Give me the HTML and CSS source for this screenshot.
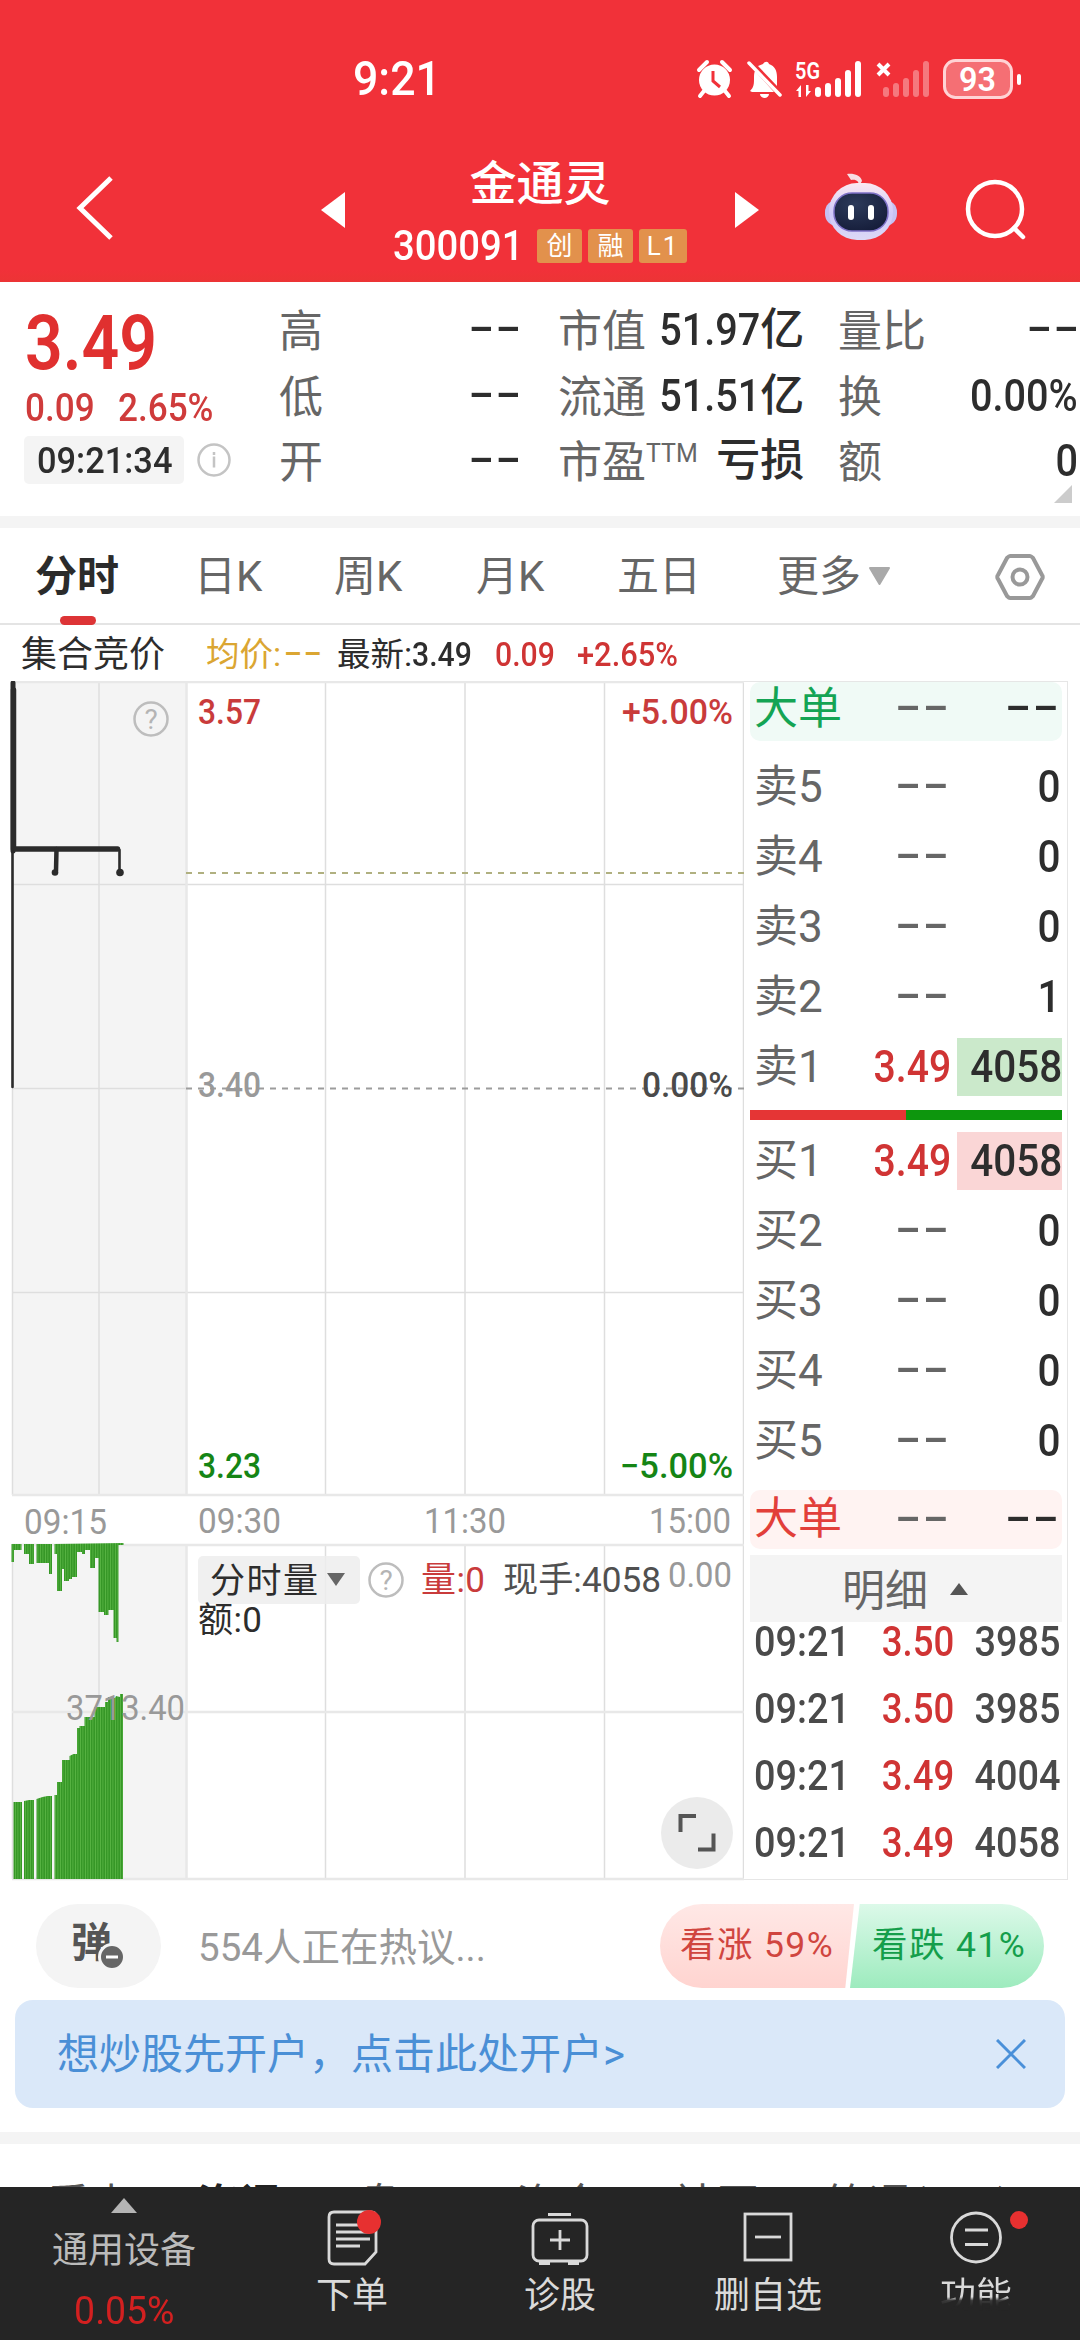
FILE: index.html
```html
<!DOCTYPE html>
<html lang="zh-CN">
<head>
<meta charset="utf-8">
<title>金通灵 300091</title>
<link rel="stylesheet" href="styles.css">
</head>
<body>
<header class="header">
  <div class="status">
    <span class="clock"><span class="num">9:21</span></span>
    <svg class="status-icons" width="330" height="44" viewBox="694 57 330 44">
      <g fill="#fff">
        <circle cx="714.500" cy="80" r="15.500"/>
        <path d="M699 70l8-8M730 70l-8-8M704 91l-4 5M725 91l4 5" stroke="#fff" stroke-width="4" stroke-linecap="round"/>
        <path d="M713 71v10l7 6" fill="none" stroke="#f13139" stroke-width="3"/>
        <path d="M750 91c4-4 4-7 4-13 0-3 0-5 1-7l19 21h-22z"/>
        <path d="M758 66l5-2c2-3 5-3 6 0 6 2 8 7 8 13v9z"/>
        <path d="M749 63l31 32" stroke="#fff" stroke-width="3.500" stroke-linecap="round"/>
        <path d="M760 94h9a4.500 4 0 0 1-9 0z"/>
        <text x="795" y="79" font-size="23" font-weight="600" textLength="25" lengthAdjust="spacingAndGlyphs">5G</text>
        <path d="M796 91l5-6v12h-2.500v-6zM806 97l5-6h-2.500v-6h-2.500z"/>
        <rect x="815" y="87" width="6" height="10" rx="3"/><rect x="825" y="83" width="6" height="14" rx="3"/><rect x="835" y="78" width="6" height="19" rx="3"/><rect x="845" y="70" width="6" height="27" rx="3"/><rect x="855" y="61" width="6" height="36" rx="3"/>
        <path d="M878 64l11 11M889 64l-11 11" stroke="#fff" stroke-width="4"/>
        <g opacity=".35"><rect x="883" y="87" width="6" height="10" rx="3"/><rect x="893" y="83" width="6" height="14" rx="3"/><rect x="903" y="78" width="6" height="19" rx="3"/><rect x="913" y="70" width="6" height="27" rx="3"/><rect x="923" y="61" width="6" height="36" rx="3"/></g>
        <rect x="944.500" y="60.500" width="67" height="37" rx="11" fill="#fff" fill-opacity=".3" stroke="#ffd3d5" stroke-width="3"/>
        <rect x="1017" y="74" width="4" height="11" rx="2"/>
        <text x="959" y="91" font-size="34" font-weight="600" textLength="37" lengthAdjust="spacingAndGlyphs">93</text>
      </g>
    </svg>
  </div>
  <div class="titlebar">
    <svg class="back" width="40" height="66" viewBox="0 0 40 66"><path d="M36 3L5 33l31 30" fill="none" stroke="#fff" stroke-width="5"/></svg>
    <svg class="arrow" width="24" height="36" viewBox="0 0 24 36"><path d="M24 0v36L0 18z" fill="#fff"/></svg>
    <div class="title">
      <h1>金通灵</h1>
      <div class="code"><span class="code-no num">300091</span><i>创</i><i>融</i><i class="wide">L1</i></div>
    </div>
    <svg class="arrow" width="24" height="36" viewBox="0 0 24 36"><path d="M0 0v36l24-18z" fill="#fff"/></svg>
    <span></span>
    <svg class="bot" width="72" height="68" viewBox="825 173 72 68">
      <defs>
        <linearGradient id="shell" x1="0" y1="0" x2="0" y2="1"><stop offset="0" stop-color="#fbe9f1"/><stop offset=".55" stop-color="#cfc8fa"/><stop offset="1" stop-color="#dcd9f6"/></linearGradient>
        <radialGradient id="visor" cx=".4" cy=".3" r=".8"><stop offset="0" stop-color="#2c3a5a"/><stop offset="1" stop-color="#141b38"/></radialGradient>
      </defs>
      <path d="M847 174c6-1 14 1 15 7l-3 5c0-5-3-7-8-6z" fill="#f7dfe4"/>
      <rect x="825" y="200" width="72" height="26" rx="12" fill="#c6c1f3"/>
      <rect x="829" y="183" width="64" height="57" rx="28" fill="url(#shell)"/>
      <rect x="834" y="193" width="54" height="38" rx="18" fill="url(#visor)" stroke="#7d70c6" stroke-width="1.500"/>
      <rect x="848" y="205" width="6" height="15" rx="3" fill="#fff"/><rect x="868" y="205" width="6" height="15" rx="3" fill="#fff"/>
    </svg>
    <span></span>
    <svg class="find" width="62" height="62" viewBox="965 179 62 62" fill="none" stroke="#fff" stroke-width="4.500" stroke-linecap="round"><circle cx="995" cy="209" r="27"/><path d="M1014 228l9 9"/></svg>
  </div>
</header>

<section class="quote">
  <div class="price">
    <div class="last"><span class="num">3.49</span></div>
    <div class="change"><span class="num">0.09</span><span class="num">2.65%</span></div>
    <div class="stamp"><span class="chip"><span class="num">09:21:34</span></span>
      <svg width="34" height="34" viewBox="0 0 34 34" fill="none" stroke="#c4c4c4"><circle cx="17" cy="17" r="15.500" stroke-width="2.500"/><path d="M17 13.500v11M17 9v3" stroke-width="2.500"/></svg></div>
  </div>
  <dl class="c1"><dt>高</dt><dd><span class="dash">--</span></dd><dt>低</dt><dd><span class="dash">--</span></dd><dt>开</dt><dd><span class="dash">--</span></dd></dl>
  <dl class="c2"><dt>市值</dt><dd><span class="num">51.97</span>亿</dd><dt>流通</dt><dd><span class="num">51.51</span>亿</dd><dt>市盈<sup>TTM</sup></dt><dd>亏损</dd></dl>
  <dl class="c3"><dt>量比</dt><dd><span class="dash">--</span></dd><dt>换</dt><dd><span class="num">0.00%</span></dd><dt>额</dt><dd><span class="num">0</span></dd></dl>
  <svg class="corner" width="18" height="18" viewBox="0 0 18 18"><path d="M18 0v18H0z" fill="#ccc"/></svg>
</section>

<nav class="periods">
  <span class="on">分时</span><span>日K</span><span>周K</span><span>月K</span><span>五日</span>
  <span class="more">更多<svg width="23" height="19" viewBox="0 0 23 19"><path d="M2 1h19L11.500 17z" fill="#a9a9a9" stroke="#a9a9a9" stroke-width="2" stroke-linejoin="round"/></svg></span>
  <svg width="50" height="48" viewBox="0 0 50 48" fill="none" stroke="#999" stroke-width="4" stroke-linejoin="round"><path d="M15 3h20c1 0 2 1 3 2l9 17c1 1 1 3 0 4l-9 17c-1 1-2 2-3 2H15c-1 0-2-1-3-2L3 26c-1-1-1-3 0-4l9-17c1-1 2-2 3-2z"/><circle cx="25" cy="24" r="7.500"/></svg>
</nav>

<div class="legend">
  <span class="auction">集合竞价</span>
  <span class="avg">均价:<span class="dash">--</span></span>
  <span>最新:<span class="num">3.49</span></span>
  <span class="up num">0.09</span>
  <span class="up num gain">+2.65%</span>
</div>

<main class="board">
  <svg class="chart" width="744" height="1200" viewBox="0 681 744 1200">
    <defs><pattern id="bar" width="2.500" height="10" patternUnits="userSpaceOnUse"><rect width="2.500" height="10" fill="#369727"/><rect width=".7" height="10" fill="#60bb49"/></pattern></defs>
    <path d="M12 681h174v814H12zM12 1545h174v334H12z" fill="#f4f4f4"/>
    <g stroke="#dedede" fill="none">
      <path stroke-width="1.500" d="M12.500 681v814M99 681v814M325.500 681v814M465 681v814M604.500 681v814M12.500 1545v334M99 1545v334M325.500 1545v334M465 1545v334M604.500 1545v334M12 884.500h732M12 1088.500h174M12 1292.500h732M743.500 681v1199"/>
      <path stroke="#e8e8e8" stroke-width="2.500" d="M186.500 681v814M186.500 1545v334M12 682h732M12 1495h732M12 1545h732M12 1712h732M12 1879h732"/>
    </g>
    <path d="M186 873h558" stroke="#b0b080" stroke-width="2" stroke-dasharray="6 6"/>
    <path d="M186 1088.500h558" stroke="#9c9c9c" stroke-width="2" stroke-dasharray="6 6"/>
    <g fill="none" stroke="#2b2b2b" stroke-linecap="round" stroke-linejoin="round">
      <path d="M13 683v168" stroke-width="5"/><path d="M13.500 690v159h104" stroke-width="5.500"/><path d="M56.500 849l-.5 22" stroke-width="4.500"/>
      <path d="M12.500 850v237M119.500 850v22" stroke-width="2.600"/>
    </g>
    <g fill="#2b2b2b"><circle cx="55" cy="872.500" r="3.300"/><circle cx="120" cy="872.500" r="3.800"/></g>
    <path fill="url(#bar)" d="M11.500 1544v18h2.500v-12h7.500v-6zM24 1544v10h5v10h5v-20zM36.500 1544v19h12.500v11h3v-30zM54.500 1544v10h2.500v37h5v-22h2v12h5v-2h3v-2h5v-25h5v2h3v-4h5v18h5v-10h3.500v54h5.500v3h4.500v-5h5v28h3v4h2v-97h5v-2z"/>
    <path fill="url(#bar)" d="M13.500 1879v-77h8.500v77zM24 1879v-78l5-1h5v79zM36.500 1879v-80l6-2 5-1h4.500v83zM54.500 1879v-84h2.500v-13h5v-22h7.500v-4l4-2h3.500v-26h2.500v-2h5v-9h10v-10h10.500v-5h3v-5l7 1 1-2 4 1v-3h3v185z"/>
    <g class="q"><circle cx="151" cy="719" r="16.500"/><text x="151" y="729" text-anchor="middle">?</text><circle cx="386" cy="1580" r="16.500"/><text x="386" y="1590" text-anchor="middle">?</text></g>
    <g class="axis">
      <text class="up" x="198" y="724" textLength="63" lengthAdjust="spacingAndGlyphs">3.57</text>
      <text class="up" x="622" y="724" textLength="111" lengthAdjust="spacingAndGlyphs">+5.00%</text>
      <text class="mute" x="198" y="1097" textLength="63" lengthAdjust="spacingAndGlyphs">3.40</text>
      <text class="flat" x="642" y="1097" textLength="91" lengthAdjust="spacingAndGlyphs">0.00%</text>
      <text class="down" x="198" y="1478" textLength="63" lengthAdjust="spacingAndGlyphs">3.23</text>
      <text class="down" x="620" y="1478" textLength="113" lengthAdjust="spacingAndGlyphs">−5.00%</text>
    </g>
    <g class="axis time">
      <text x="24" y="1534" textLength="83" lengthAdjust="spacingAndGlyphs">09:15</text>
      <text x="198" y="1533" textLength="83" lengthAdjust="spacingAndGlyphs">09:30</text>
      <text x="424" y="1533" textLength="82" lengthAdjust="spacingAndGlyphs">11:30</text>
      <text x="649" y="1533" textLength="82" lengthAdjust="spacingAndGlyphs">15:00</text>
      <text x="66" y="1720" textLength="119" lengthAdjust="spacingAndGlyphs">3713.40</text>
      <text x="668" y="1587" textLength="64" lengthAdjust="spacingAndGlyphs">0.00</text>
    </g>
    <rect x="198" y="1556" width="162" height="48" rx="5" fill="#ededed" fill-opacity=".85"/>
    <path d="M327 1573h18l-9 13z" fill="#666"/>
    <g class="vol">
      <text x="210" y="1593" textLength="108">分时量</text>
      <text x="198" y="1632" textLength="64">额:0</text>
      <text x="421" y="1592" textLength="64" fill="#c93b3b">量:0</text>
      <text x="503" y="1592" textLength="158" lengthAdjust="spacingAndGlyphs" fill="#505050">现手:4058</text>
    </g>
    <circle cx="697" cy="1833" r="36" fill="#ebebeb"/>
    <path d="M680.500 1832v-16h15.500M698 1849.500h15.500v-16" fill="none" stroke="#555" stroke-width="4"/>
  </svg>

  <aside class="book">
    <div class="row big sell"><b>大单</b><span><span class="dash">--</span></span><em><span class="dash">--</span></em></div>
    <div class="levels">
      <div class="row"><b>卖5</b><span><span class="dash">--</span></span><em><span class="num">0</span></em></div>
      <div class="row"><b>卖4</b><span><span class="dash">--</span></span><em><span class="num">0</span></em></div>
      <div class="row"><b>卖3</b><span><span class="dash">--</span></span><em><span class="num">0</span></em></div>
      <div class="row"><b>卖2</b><span><span class="dash">--</span></span><em><span class="num">1</span></em></div>
      <div class="row"><b>卖1</b><span class="up"><span class="num">3.49</span></span><em class="ask"><span class="num">4058</span></em></div>
    </div>
    <div class="ratio"><i></i><i></i></div>
    <div class="levels">
      <div class="row"><b>买1</b><span class="up"><span class="num">3.49</span></span><em class="bid"><span class="num">4058</span></em></div>
      <div class="row"><b>买2</b><span><span class="dash">--</span></span><em><span class="num">0</span></em></div>
      <div class="row"><b>买3</b><span><span class="dash">--</span></span><em><span class="num">0</span></em></div>
      <div class="row"><b>买4</b><span><span class="dash">--</span></span><em><span class="num">0</span></em></div>
      <div class="row"><b>买5</b><span><span class="dash">--</span></span><em><span class="num">0</span></em></div>
    </div>
    <div class="row big buy"><b>大单</b><span><span class="dash">--</span></span><em><span class="dash">--</span></em></div>
    <div class="detail">明细<svg width="18" height="12" viewBox="0 0 18 12"><path d="M9 0l9 12H0z" fill="#555"/></svg></div>
    <div class="ticks">
      <div class="row"><b><span class="num">09:21</span></b><span class="up"><span class="num">3.50</span></span><em><span class="num">3985</span></em></div>
      <div class="row"><b><span class="num">09:21</span></b><span class="up"><span class="num">3.50</span></span><em><span class="num">3985</span></em></div>
      <div class="row"><b><span class="num">09:21</span></b><span class="up"><span class="num">3.49</span></span><em><span class="num">4004</span></em></div>
      <div class="row"><b><span class="num">09:21</span></b><span class="up"><span class="num">3.49</span></span><em><span class="num">4058</span></em></div>
    </div>
  </aside>
</main>

<section class="talk">
  <div class="danmu">弹<svg width="28" height="28" viewBox="0 0 28 28"><circle cx="14" cy="14" r="12.500" fill="#666" stroke="#f4f4f4" stroke-width="3"/><path d="M8 14h12" stroke="#fff" stroke-width="3"/></svg></div>
  <span class="hot">554人正在热议...</span>
  <div class="vote"><span class="bull">看涨 59%</span><span class="bear">看跌 41%</span></div>
</section>

<section class="banner"><span>想炒股先开户，点击此处开户&gt;</span>
  <svg width="30" height="30" viewBox="0 0 30 30" stroke="#4a90d9" stroke-width="3"><path d="M1 1l28 28M29 1L1 29"/></svg>
</section>

<nav class="feeds"><span>看点</span><strong>资讯</strong><span>盘口</span><span>资金</span><span>社区</span><span>简况(F10)</span></nav>

<footer class="dock">
  <div class="index"><svg width="26" height="15" viewBox="0 0 26 15"><path d="M13 0l13 15H0z" fill="#b4b4b4"/></svg><span>通用设备</span><strong class="num">0.05%</strong></div>
  <div class="tool">
    <svg width="60" height="60" viewBox="322 2207 60 60" fill="none" stroke="#d9d9d9" stroke-width="2.800"><path d="M334 2212h37q5 0 5 5v35l-11 12h-31q-5 0-5-5v-42q0-5 5-5z"/><path d="M336 2225h24M336 2232h34M336 2239h34M336 2246h24"/><circle cx="369" cy="2222" r="12" fill="#e73030" stroke="none"/></svg>
    <span>下单</span></div>
  <div class="tool">
    <svg width="60" height="60" viewBox="530 2207 60 60" fill="none" stroke="#d9d9d9" stroke-width="2.800"><rect x="533" y="2220" width="54" height="41" rx="6"/><path d="M548 2214.500h23M560 2230v20M550 2240h20"/><path d="M539 2263h11M568 2263h11" stroke-width="4"/></svg>
    <span>诊股</span></div>
  <div class="tool">
    <svg width="60" height="60" viewBox="737 2207 60 60" fill="none" stroke="#d9d9d9" stroke-width="2.800"><rect x="744" y="2214" width="46" height="46"/><path d="M754 2237h26"/></svg>
    <span>删自选</span></div>
  <div class="tool fade">
    <svg width="86" height="60" viewBox="932 2207 86 60" fill="none" stroke="#d9d9d9" stroke-width="2.800" overflow="visible"><circle cx="975" cy="2237.500" r="24.500"/><path d="M964 2230h23M964 2244.500h23"/><circle cx="1018" cy="2220" r="9" fill="#e73030" stroke="none"/></svg>
    <span>功能</span></div>
</footer>
</body>
</html>
```
FILE: styles.css
```css
* { box-sizing: border-box; margin: 0; padding: 0; }
body {
  width: 1080px; height: 2340px; overflow: hidden;
  background: #fff; color: #2d2d2d;
  font-family: Roboto, "Noto Sans CJK SC", sans-serif;
}
svg { display: block; flex: none; }
svg text { font-family: Roboto, "Noto Sans CJK SC", sans-serif; }
i, em { font-style: normal; }
.up { color: #cf3434; }

/* condensed numerals */
.num { display: inline-block; font-weight: 500; transform: scaleX(.9); transform-origin: left center; }
/* wide placeholder dashes */
.dash { display: inline-block; font-weight: 500; letter-spacing: 1px; transform: translate(3px, -3px) scaleX(1.7); transform-origin: right center; }

.header { height: 282px; background: linear-gradient(#f13139 270px, #ec3435); color: #fff; }
.status { height: 130px; display: flex; justify-content: space-between; padding: 57px 56px 0 353px; }
.clock { font-size: 48px; line-height: 44px; }
.clock .num { font-weight: 500; transform: scaleX(.93); }
.titlebar { height: 152px; display: grid; grid-template-columns: 321px 24px 390px 24px 66px 72px 68px 62px; align-items: center; }
.back { margin-left: 75px; margin-top: 3px; }
.arrow { margin-top: 8px; }
.bot { margin-top: 2px; }
.find { margin-top: 7px; }
.title { align-self: start; padding-top: 23px; display: flex; flex-direction: column; align-items: center; }
.title h1 { font-size: 47px; font-weight: 500; line-height: 62px; }
.code { display: flex; gap: 6px; margin-top: 14px; height: 34px; line-height: 34px; }
.code-no { font-size: 42.500px; width: 138px; }
.code i { width: 45px; height: 34px; border-radius: 3px; background: #e2914c; font-size: 26px; line-height: 34px; text-align: center; }
.code .wide { width: 48px; letter-spacing: 2px; }

.quote { position: relative; height: 246px; display: grid; grid-template-columns: 279px 241px 281px 279px; border-bottom: 12px solid #f4f4f4; padding-top: 15px; }
.price { padding-left: 25px; }
.last { font-size: 76px; line-height: 92px; color: #e0302f; }
.last .num { font-weight: 600; transform: scaleX(.87); }
.change { display: grid; grid-template-columns: 93px 120px; font-size: 39px; line-height: 36px; color: #cf3b3b; padding-top: 1px; }
.stamp { display: flex; align-items: center; gap: 13px; margin: 10px 0 0 -1px; }
.chip { width: 160px; height: 48px; background: #f4f4f4; border-radius: 5px; padding-left: 13px; font-size: 37px; line-height: 49px; }
.chip .num { transform: scaleX(.93); }
.quote dl { display: grid; grid-template-columns: 90px 1fr; grid-auto-rows: 65.500px; line-height: 66px; font-size: 44px; }
.quote dt { color: #666; padding-top: 2px; white-space: nowrap; }
.quote dd { text-align: right; font-weight: 500; white-space: nowrap; }
.quote dd .num { transform-origin: right center; }
.quote sup { font-size: 25px; line-height: 1; vertical-align: 16px; }
.c2 { margin-left: 38px; }
.c3 { margin-left: 37px; margin-right: 2px; }
.corner { position: absolute; right: 8px; bottom: 13px; }

.periods { height: 97px; border-bottom: 2px solid #e4e4e4; display: grid; grid-template-columns: 159px 140px 142px 141px 160px 218px 50px; padding-left: 35px; align-items: center; font-size: 42px; color: #666; line-height: 97px; }
.periods .on { position: relative; color: #2b2b2b; font-weight: 700; }
.periods .on::after { content: ""; position: absolute; left: 25px; bottom: 0; width: 36px; height: 9px; border-radius: 5px; background: #dd3436; }
.more { display: flex; align-items: center; gap: 7px; }

.legend { height: 56px; display: grid; grid-template-columns: 185px 131px 158px 82px 120px; padding: 2px 0 0 21px; font-size: 33.500px; line-height: 56px; white-space: nowrap; }
.auction { font-size: 36px; }
.avg { color: #dba632; }
.avg .dash { transform: translate(3px, -2px) scaleX(1.6); transform-origin: left center; }
.gain { transform: scaleX(.92); }

.board { display: flex; height: 1200px; }
.q circle { fill: none; stroke: #bdbdbd; stroke-width: 2.500; }
.q text { fill: #b4b4b4; font-size: 28px; }
.axis text { font-size: 35px; font-weight: 500; }
.axis .up { fill: #c93b3b; }
.axis .down { fill: #158515; }
.axis .mute { fill: #999; }
.axis .flat { fill: #4a4a4a; }
.axis.time text { fill: #999; font-weight: 400; }
.vol { font-size: 35px; fill: #2d2d2d; }

.book { width: 324px; height: 1199px; border: 1.500px solid #e6e6e6; border-left: 0; padding: 0 5px 0 6px; font-size: 45px; }
.row { display: grid; grid-template-columns: 90px 111px 6px 105px; height: 70px; line-height: 70px; }
.row b { font-weight: 400; font-size: 44px; color: #666; padding-left: 4px; white-space: nowrap; }
.row > span { text-align: right; color: #666; padding-right: 3px; }
.row > span.up { color: #d03434; padding: 0; }
.row .num { transform-origin: right center; }
.row .up .num { transform: scaleX(.87); }
.row b .num { transform-origin: left center; }
.row em { grid-column: 4; text-align: right; color: #2d2d2d; height: 58px; line-height: 58px; align-self: center; padding-right: 1px; }
.row em .dash { margin-right: 3px; }
.row em.ask, .row em.bid { padding-right: 0; }
.big { height: 59px; line-height: 54px; border-radius: 10px; }
.big em { line-height: 54px; align-self: start; }
.sell { background: #f0faf6; margin-bottom: 11px; }
.sell b { color: #14a454; }
.buy { background: #fff3f2; }
.buy b { color: #e23f3a; }
.ask { background: #cbe9cb; }
.bid { background: #fad6d6; }
.ratio { height: 10px; display: flex; margin: 8px 0 6px; }
.ratio i { flex: 1; background: #e53535; }
.ratio i + i { background: #0d960d; }
.levels + .buy { margin-top: 14px; line-height: 59px; }
.levels + .buy em { line-height: 59px; }
.detail { margin-top: 6px; height: 67px; background: #f4f4f4; display: flex; align-items: center; justify-content: center; gap: 22px; font-size: 43px; line-height: 70px; padding: 4px 2px 0 0; color: #666; }
.detail svg { margin-top: -4px; }
.ticks { margin-top: -14px; font-size: 42px; }
.ticks .row { height: 67px; line-height: 67px; }
.ticks .row b { color: #4a4a4a; font-size: 42px; }
.ticks .row em { color: #4a4a4a; line-height: 58px; padding-right: 2px; }
.ticks .row .up { margin-right: -3px; }

.talk { height: 119px; display: flex; align-items: center; padding: 11px 36px 0; }
.danmu { position: relative; width: 125px; height: 84px; border-radius: 42px; background: #f4f4f4; color: #555; font-size: 41px; font-weight: 700; line-height: 79px; padding-left: 35px; }
.danmu svg { position: absolute; left: 62px; top: 39px; }
.hot { margin: -4px 0 0 37px; font-size: 38.500px; color: #999; width: 462px; }
.vote { display: flex; width: 384px; height: 84px; font-size: 35.500px; letter-spacing: 1.400px; line-height: 83px; border-radius: 42px; overflow: hidden; }
.vote span { flex: none; }
.bull { width: 194px; padding-left: 20px; color: #d0453f; background: linear-gradient(#ffe8e6, #ffd4d0); clip-path: polygon(0 0, 100% 0, 95.500% 100%, 0 100%); }
.bear { width: 194px; margin-left: -4px; padding-left: 22px; color: #149e4b; background: linear-gradient(#dcf9e9, #9debbe); clip-path: polygon(5% 0, 100% 0, 100% 100%, 0 100%); }

.banner { margin: 0 15px; height: 108px; border-radius: 18px; background: #dae8f9; color: #4a8fd6; display: flex; align-items: center; justify-content: space-between; padding: 0 39px 0 42px; font-size: 42px; line-height: 111px; white-space: nowrap; }

.feeds { margin-top: 24px; height: 55px; border-top: 12px solid #f4f4f4; overflow: hidden; display: grid; grid-template-columns: 150px 161px 158px 157px 152px 220px; padding: 36px 0 0 47px; font-size: 43px; line-height: 50px; color: #555; white-space: nowrap; }
.feeds strong { color: #222; }

.dock { height: 153px; background: #252525; display: grid; grid-template-columns: 248px repeat(4, 208px); color: #dadada; font-size: 36px; }
.index { display: flex; flex-direction: column; align-items: center; padding-top: 11px; color: #bbb; }
.index span { line-height: 50px; margin-top: 13px; }
.index .num { transform: scaleX(.96); transform-origin: center; font-weight: 400; font-size: 39px; line-height: 44px; margin-top: 13px; color: #d32020; }
.tool { display: flex; flex-direction: column; align-items: center; padding-top: 20px; }
.tool span { line-height: 46px; margin-top: 6px; }
.fade span { background: linear-gradient(#dadada 52%, #3a3a3a 60%, #252525 72%); background-clip: text; -webkit-background-clip: text; color: transparent; }
```
